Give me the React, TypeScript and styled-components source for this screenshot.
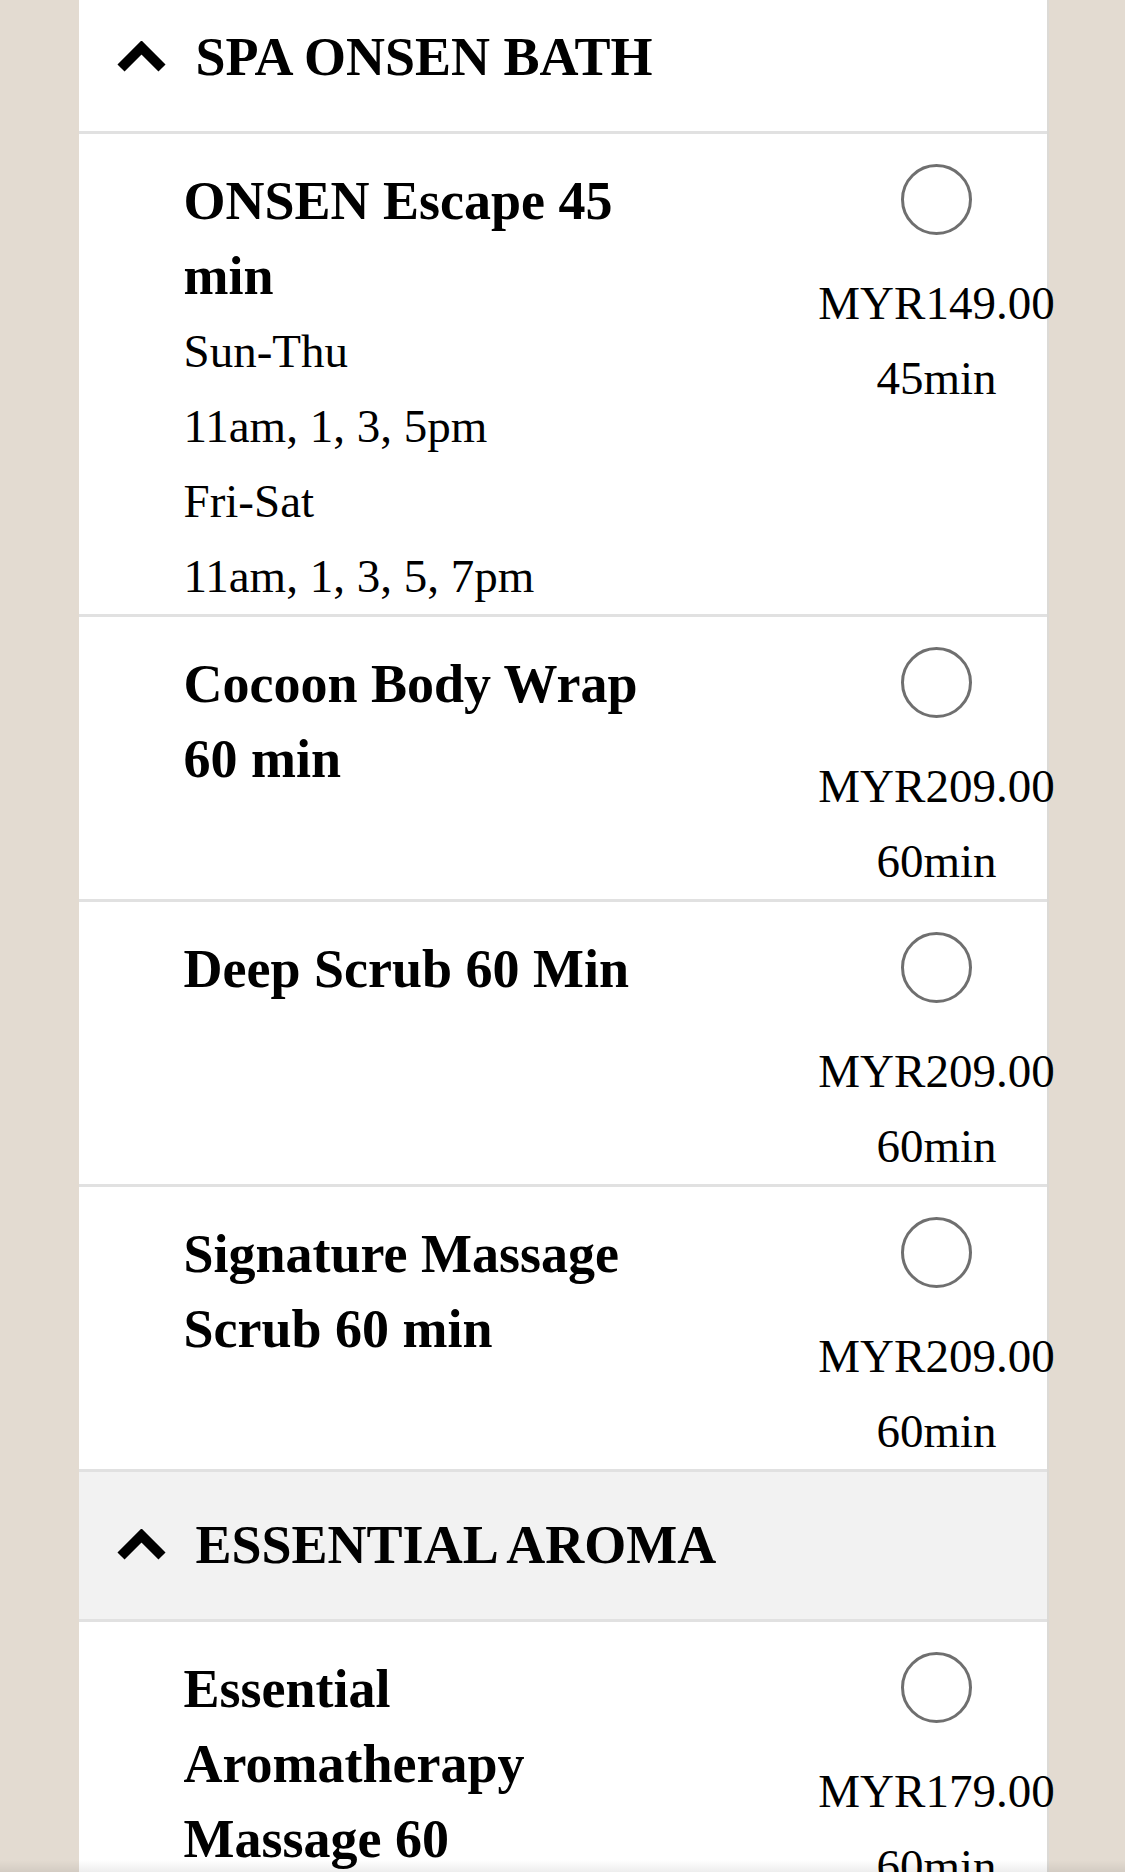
import React from "react";
import styled, { createGlobalStyle } from "styled-components";

const GlobalStyle = createGlobalStyle`
  html, body {
    margin: 0;
    padding: 0;
    background: #e3dbd1;
  }
  body {
    font-family: "Liberation Serif", "Times New Roman", serif;
    color: #000;
  }
`;

const Viewport = styled.div`
  height: 100vh;
  overflow: hidden;
  position: relative;
`;

const Panel = styled.main`
  width: 968px;
  margin: -16px auto 0;
  background: #fff;
  box-shadow: 2px 0 0 #dcdad6;
`;

const SectionHeader = styled.button<{ $shaded?: boolean }>`
  display: flex;
  align-items: center;
  gap: 30px;
  width: 100%;
  height: 150px;
  box-sizing: border-box;
  padding: 0 0 2px 38px;
  border: none;
  border-bottom: 3px solid #e1e1e1;
  background: ${(p) => (p.$shaded ? "#f2f2f2" : "#ffffff")};
  font-family: "Liberation Serif", "Times New Roman", serif;
  font-size: 54px;
  font-weight: 700;
  line-height: 1;
  color: #000;
  text-align: left;
  cursor: pointer;
`;

const Chevron = styled.svg`
  width: 49px;
  height: 31px;
  flex: none;
`;

const ServiceRow = styled.label`
  display: grid;
  grid-template-columns: 490px 248px;
  column-gap: 139px;
  padding: 30px 0 0 105px;
  border-bottom: 3px solid #e1e1e1;
  cursor: pointer;
`;

const Info = styled.div`
  display: flex;
  flex-direction: column;
`;

const ServiceName = styled.div`
  font-size: 54px;
  font-weight: 700;
  line-height: 75px;
`;

const Detail = styled.div`
  font-size: 47px;
  line-height: 75px;
`;

const PriceCol = styled.div`
  display: flex;
  flex-direction: column;
  align-items: center;
  text-align: center;
`;

const Radio = styled.span`
  display: block;
  width: 71px;
  height: 71px;
  box-sizing: border-box;
  border: 3px solid #6f6f6f;
  border-radius: 50%;
  margin-bottom: 31px;
`;

const PriceLine = styled.div`
  font-size: 47px;
  line-height: 75px;
  white-space: nowrap;
`;

const BottomFade = styled.div`
  position: absolute;
  left: 0;
  right: 0;
  bottom: 0;
  height: 12px;
  background: linear-gradient(to bottom, rgba(0, 0, 0, 0), rgba(0, 0, 0, 0.07));
  pointer-events: none;
`;

type Service = {
  name: string;
  details?: string[];
  price: string;
  duration: string;
};

type Section = {
  title: string;
  shaded?: boolean;
  services: Service[];
};

const sections: Section[] = [
  {
    title: "SPA ONSEN BATH",
    services: [
      {
        name: "ONSEN Escape 45 min",
        details: ["Sun-Thu", "11am, 1, 3, 5pm", "Fri-Sat", "11am, 1, 3, 5, 7pm"],
        price: "MYR149.00",
        duration: "45min",
      },
      { name: "Cocoon Body Wrap 60 min", price: "MYR209.00", duration: "60min" },
      { name: "Deep Scrub 60 Min", price: "MYR209.00", duration: "60min" },
      { name: "Signature Massage Scrub 60 min", price: "MYR209.00", duration: "60min" },
    ],
  },
  {
    title: "ESSENTIAL AROMA",
    shaded: true,
    services: [
      { name: "Essential Aromatherapy Massage 60", price: "MYR179.00", duration: "60min" },
    ],
  },
];

const ChevronUp = () => (
  <Chevron viewBox="0 0 49 31" aria-hidden="true">
    <polyline
      points="4,27 24.5,6.5 45,27"
      fill="none"
      stroke="#000"
      strokeWidth="10"
      strokeLinejoin="miter"
      strokeLinecap="butt"
    />
  </Chevron>
);

export default function App() {
  return (
    <Viewport>
      <GlobalStyle />
      <Panel>
        {sections.map((section) => (
          <section key={section.title}>
            <SectionHeader $shaded={section.shaded}>
              <ChevronUp />
              <span>{section.title}</span>
            </SectionHeader>
            {section.services.map((s) => (
              <ServiceRow key={s.name}>
                <Info>
                  <ServiceName>{s.name}</ServiceName>
                  {s.details?.map((d) => (
                    <Detail key={d}>{d}</Detail>
                  ))}
                </Info>
                <PriceCol>
                  <Radio />
                  <PriceLine>{s.price}</PriceLine>
                  <PriceLine>{s.duration}</PriceLine>
                </PriceCol>
              </ServiceRow>
            ))}
          </section>
        ))}
      </Panel>
      <BottomFade />
    </Viewport>
  );
}
